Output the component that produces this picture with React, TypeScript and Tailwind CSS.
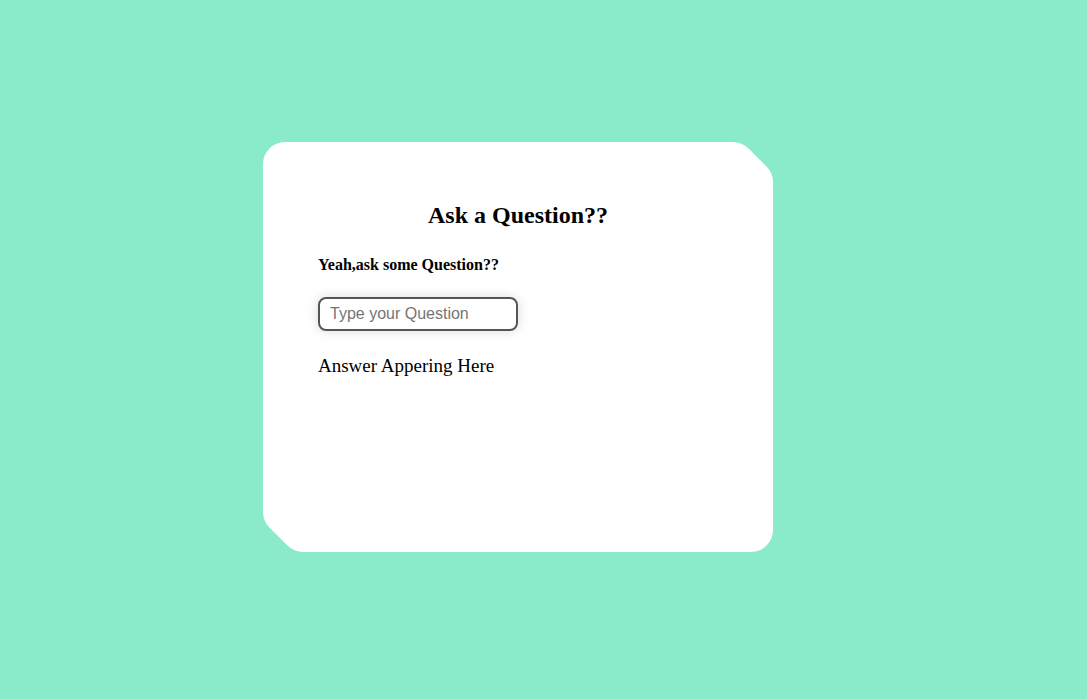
import { useState } from "react";

export default function App() {
  const [question, setQuestion] = useState("");

  return (
    <div className="min-h-screen w-full bg-[#89ebc9] pt-[142px] pl-[263px]">
      <div className="relative w-[492px] h-[392px] rounded-[22px] bg-white shadow-[3px_3px_0_0_#fff,6px_6px_0_0_#fff,9px_9px_0_0_#fff,12px_12px_0_0_#fff,15px_15px_0_0_#fff,18px_18px_0_0_#fff]">
        <div className="w-[510px] pt-[60px] font-['Liberation_Serif',serif] text-black">
          <h2 className="text-center text-[24px] font-bold leading-[27px]">Ask a Question??</h2>
          <div className="pl-[55px]">
            <p className="mt-[27px] text-[16px] font-bold leading-[18px]">Yeah,ask some Question??</p>
            <input
              value={question}
              onChange={(e) => setQuestion(e.target.value)}
              placeholder="Type your Question"
              className="mt-[23px] block w-[200px] h-[34px] rounded-lg border-2 border-[#555] px-[10px] font-['Liberation_Sans',Arial,sans-serif] text-[16px] text-black placeholder:text-[#757575] shadow-[0_0_12px_rgba(0,0,0,0.15)] outline-none"
            />
            <p className="mt-[23px] text-[19px] leading-[23px]">Answer Appering Here</p>
          </div>
        </div>
      </div>
    </div>
  );
}
